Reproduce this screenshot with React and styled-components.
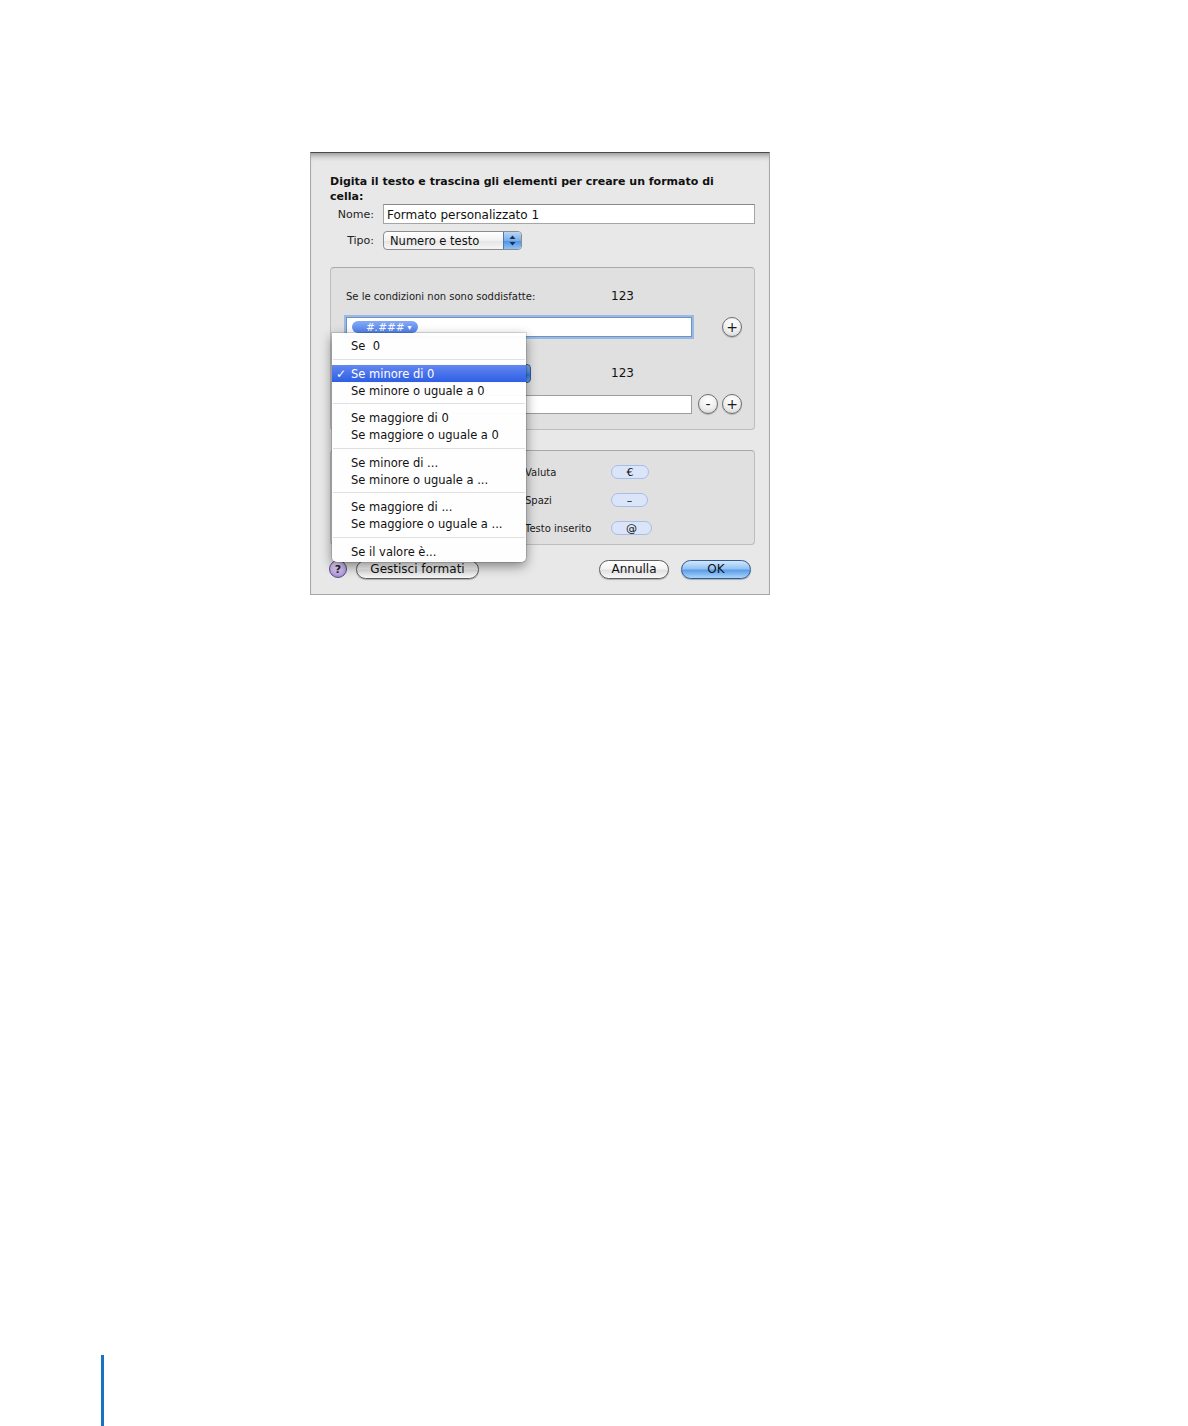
import styled, { createGlobalStyle } from "styled-components";

const GlobalStyle = createGlobalStyle`
  html, body {
    margin: 0;
    padding: 0;
    background: #fff;
    overflow: hidden;
  }
  body {
    font-family: "DejaVu Sans", "Liberation Sans", sans-serif;
    color: #111;
  }
`;

const menuItems = [
  [{ label: "Se  0" }],
  [{ label: "Se minore di 0", checked: true }, { label: "Se minore o uguale a 0" }],
  [{ label: "Se maggiore di 0" }, { label: "Se maggiore o uguale a 0" }],
  [{ label: "Se minore di ..." }, { label: "Se minore o uguale a ..." }],
  [{ label: "Se maggiore di ..." }, { label: "Se maggiore o uguale a ..." }],
  [{ label: "Se il valore è..." }],
];

// the left column sits under the open menu, only its pills show through faintly
const elements = [
  { right: "Valuta", rightPill: "€", w: 38 },
  { right: "Spazi", rightPill: "–", w: 37 },
  { right: "Testo inserito", rightPill: "@", w: 41 },
];

export default function App() {
  return (
    <Page>
      <GlobalStyle />
      <DialogSlot>
        <Dialog>
          <Heading>Digita il testo e trascina gli elementi per creare un formato di cella:</Heading>
          <FormGrid>
            <Label>Nome:</Label>
            <TextInput>Formato personalizzato 1</TextInput>
            <Label>Tipo:</Label>
            <PopUp>
              <span>Numero e testo</span>
              <Stepper>
                <svg width="7" height="11" viewBox="0 0 7 11">
                  <path d="M3.5 0.5 L6.5 4 L0.5 4 Z" />
                  <path d="M3.5 10.5 L6.5 7 L0.5 7 Z" />
                </svg>
              </Stepper>
            </PopUp>
          </FormGrid>

          <Group $height={163} $pad="19px 12px 0 15px">
            <Block>
              <BlockHead>
                <SmallText>Se le condizioni non sono soddisfatte:</SmallText>
                <Sample>123</Sample>
              </BlockHead>
              <FieldRow $gap={11}>
                <Field $focused>
                  <Token>#.### <i>▾</i></Token>
                </Field>
                <RoundButtons>
                  <RoundButton>+</RoundButton>
                </RoundButtons>
              </FieldRow>
            </Block>
            <Block $mt={27}>
              <BlockHead>
                <BluePopUp />
                <Sample>123</Sample>
              </BlockHead>
              <FieldRow $gap={11}>
                <Field $h={19} />
                <RoundButtons>
                  <RoundButton>-</RoundButton>
                  <RoundButton>+</RoundButton>
                </RoundButtons>
              </FieldRow>
            </Block>
          </Group>

          <Group $height={95} $mt={20} $pad="11px 12px 0 15px">
            <ElementGrid>
              {elements.map((e) => (
                <ElementRow key={e.right}>
                  <span />
                  <GhostPill />
                  <SmallText>{e.right}</SmallText>
                  <Pill $w={e.w}>{e.rightPill}</Pill>
                </ElementRow>
              ))}
            </ElementGrid>
          </Group>

          <ButtonBar>
            <HelpButton>?</HelpButton>
            <PushButton $w={123}>Gestisci formati</PushButton>
            <Spacer />
            <PushButton $w={70}>Annulla</PushButton>
            <PushButton $w={70} $primary>OK</PushButton>
          </ButtonBar>

          <Menu>
            {menuItems.map((section, i) => (
              <MenuSection key={i} $first={i === 0}>
                {section.map((item) => (
                  <MenuItem key={item.label} $active={item.checked}>
                    {item.checked && <Check>✓</Check>}
                    {item.label}
                  </MenuItem>
                ))}
              </MenuSection>
            ))}
          </Menu>
        </Dialog>
      </DialogSlot>
      <Footer>
        <Rule />
      </Footer>
    </Page>
  );
}

const Page = styled.div`
  min-height: 1426px;
  display: flex;
  flex-direction: column;
`;

const DialogSlot = styled.div`
  padding: 152px 0 0 310px;
`;

const Footer = styled.div`
  margin-top: auto;
  padding-left: 101px;
`;

const Rule = styled.div`
  width: 3px;
  height: 71px;
  background: #1b72c4;
`;

const Dialog = styled.div`
  position: relative;
  box-sizing: border-box;
  width: 460px;
  height: 443px;
  padding: 21px 14px 0 19px;
  background: #e8e8e8;
  border: 1px solid #a8a8a8;
  border-top-color: #4a4a4a;
  box-shadow: inset 0 7px 6px -5px rgba(0, 0, 0, 0.4);
  display: flex;
  flex-direction: column;
`;

const Heading = styled.div`
  width: 400px;
  font-size: 11px;
  font-weight: bold;
  line-height: 15px;
  color: #111;
`;

const FormGrid = styled.div`
  display: grid;
  grid-template-columns: 44px 1fr;
  column-gap: 9px;
  row-gap: 7px;
`;

const Label = styled.div`
  text-align: right;
  align-self: center;
  font-size: 11px;
  color: #222;
`;

const TextInput = styled.div`
  box-sizing: border-box;
  height: 20px;
  padding: 1px 3px 0;
  line-height: 18px;
  font-size: 12px;
  background: #fff;
  border: 1px solid #a5a5a5;
  border-top-color: #8a8a8a;
`;

const PopUp = styled.div`
  justify-self: start;
  box-sizing: border-box;
  width: 139px;
  height: 19px;
  display: flex;
  align-items: center;
  padding-left: 6px;
  font-size: 11.5px;
  background: linear-gradient(#ffffff, #f1f1f1 50%, #e4e4e4 51%, #f6f6f6);
  border: 1px solid #8c8c8c;
  border-radius: 4px;
  overflow: hidden;
  span {
    flex: 1;
  }
`;

const Stepper = styled.div`
  width: 17px;
  align-self: stretch;
  display: flex;
  align-items: center;
  justify-content: center;
  border-left: 1px solid #4f77b5;
  background: linear-gradient(#b9d6f7, #79aee9 50%, #4d8ee0 51%, #8ec5f6);
  svg path {
    fill: #1c2f55;
  }
`;

const Group = styled.div`
  box-sizing: border-box;
  height: ${(p) => p.$height}px;
  margin-top: ${(p) => p.$mt || 17}px;
  padding: ${(p) => p.$pad};
  background: #e0e0e0;
  border: 1px solid #bdbdbd;
  border-top-color: #a9a9a9;
  border-radius: 4px;
`;

const Block = styled.div`
  margin-top: ${(p) => p.$mt || 0}px;
`;

const BlockHead = styled.div`
  display: grid;
  grid-template-columns: 265px auto;
  align-items: center;
  height: 19px;
`;

const SmallText = styled.span`
  font-size: 10px;
  color: #1a1a1a;
  white-space: nowrap;
`;

const Sample = styled.span`
  font-size: 12px;
  color: #111;
  margin-top: -1px;
`;

const BluePopUp = styled.div`
  box-sizing: border-box;
  width: 186px;
  height: 19px;
  margin-left: -1px;
  background: linear-gradient(#7fb0f0, #4c8be4 50%, #2f72dc 51%, #6aa8ef);
  border: 1px solid #37598f;
  border-radius: 4px;
`;

const FieldRow = styled.div`
  display: flex;
  align-items: center;
  justify-content: space-between;
  margin-top: ${(p) => p.$gap}px;
`;

const Field = styled.div`
  box-sizing: border-box;
  width: 346px;
  height: ${(p) => p.$h || 20}px;
  padding-left: 5px;
  display: flex;
  align-items: center;
  background: #fff;
  border: 1px solid ${(p) => (p.$focused ? "#6d93c8" : "#9d9d9d")};
  box-shadow: ${(p) => (p.$focused ? "0 0 0 2px #9ab9e3" : "none")};
`;

const Token = styled.span`
  display: inline-flex;
  align-items: center;
  gap: 3px;
  box-sizing: border-box;
  height: 12px;
  padding: 0 6px 0 14px;
  font-size: 10.5px;
  font-style: italic;
  color: #fff;
  background: linear-gradient(#86aaf5, #4f82ee);
  border-radius: 7px;
  i {
    font-style: normal;
    font-size: 8px;
  }
`;

const RoundButtons = styled.div`
  display: flex;
  gap: 4px;
`;

const RoundButton = styled.div`
  box-sizing: border-box;
  width: 20px;
  height: 20px;
  border-radius: 50%;
  display: flex;
  align-items: center;
  justify-content: center;
  font-size: 14px;
  line-height: 1;
  color: #1a1a1a;
  background: radial-gradient(circle at 50% 30%, #ffffff, #f0f0f0 50%, #cfcfcf);
  border: 1px solid #6e6e6e;
  box-shadow: 0 1px 1px rgba(0, 0, 0, 0.2);
`;

const ElementGrid = styled.div`
  display: flex;
  flex-direction: column;
  gap: 8px;
`;

const ElementRow = styled.div`
  display: grid;
  grid-template-columns: 84px 95px 86px auto;
  align-items: center;
  height: 20px;
`;

const Pill = styled.span`
  box-sizing: border-box;
  width: ${(p) => p.$w}px;
  height: 14px;
  display: flex;
  align-items: center;
  justify-content: center;
  font-size: 11px;
  color: #111;
  background: #dbe5f9;
  border: 1px solid #a8bde8;
  border-radius: 7px;
`;

const GhostPill = styled.span`
  box-sizing: border-box;
  width: 40px;
  height: 14px;
  background: #dbe5f9;
  border: 1px solid #a8bde8;
  border-radius: 7px;
`;

const ButtonBar = styled.div`
  display: flex;
  align-items: center;
  gap: 9px;
  margin: 14px 4px 0 -1px;
  height: 20px;
  & > :last-child {
    margin-left: 3px;
  }
`;

const Spacer = styled.div`
  flex: 1;
`;

const HelpButton = styled.div`
  box-sizing: border-box;
  width: 18px;
  height: 18px;
  border-radius: 50%;
  display: flex;
  align-items: center;
  justify-content: center;
  font-size: 11px;
  font-weight: bold;
  color: #2a2140;
  background: radial-gradient(circle at 50% 30%, #efe6fb, #c3aee8 55%, #8d6fc6);
  border: 1px solid #5c4d7c;
`;

const PushButton = styled.div`
  box-sizing: border-box;
  width: ${(p) => p.$w}px;
  height: 19px;
  display: flex;
  align-items: center;
  justify-content: center;
  font-size: 12px;
  color: #111;
  border-radius: 10px;
  border: 1px solid ${(p) => (p.$primary ? "#2f5a95" : "#5e5e5e")};
  background: ${(p) =>
    p.$primary
      ? "linear-gradient(#d3e7fc, #93c3f3 45%, #5d9de8 55%, #a9d6fc)"
      : "linear-gradient(#ffffff, #f3f3f3 45%, #e1e1e1 55%, #f8f8f8)"};
  box-shadow: 0 1px 1px rgba(0, 0, 0, 0.25);
`;

const Menu = styled.div`
  position: absolute;
  left: 21px;
  top: 180px;
  box-sizing: border-box;
  width: 194px;
  height: 229px;
  padding: 4px 0 0;
  background: rgba(255, 255, 255, 0.96);
  border-radius: 0 0 5px 5px;
  box-shadow: 0 4px 12px rgba(0, 0, 0, 0.45), 0 0 0 1px rgba(0, 0, 0, 0.12);
`;

const MenuSection = styled.div`
  ${(p) =>
    !p.$first &&
    `
    margin-top: 10.5px;
    position: relative;
    &::before {
      content: "";
      position: absolute;
      left: 1px;
      right: 1px;
      top: -6px;
      height: 1px;
      background: #e0e0e0;
    }
  `}
`;

const MenuItem = styled.div`
  position: relative;
  height: 17px;
  line-height: 18px;
  padding-left: 19px;
  font-size: 11.5px;
  color: ${(p) => (p.$active ? "#fff" : "#111")};
  background: ${(p) => (p.$active ? "linear-gradient(#6487f0, #2d5fe5)" : "transparent")};
  white-space: pre;
`;

const Check = styled.span`
  position: absolute;
  left: 4px;
  font-size: 12px;
  font-weight: bold;
`;
